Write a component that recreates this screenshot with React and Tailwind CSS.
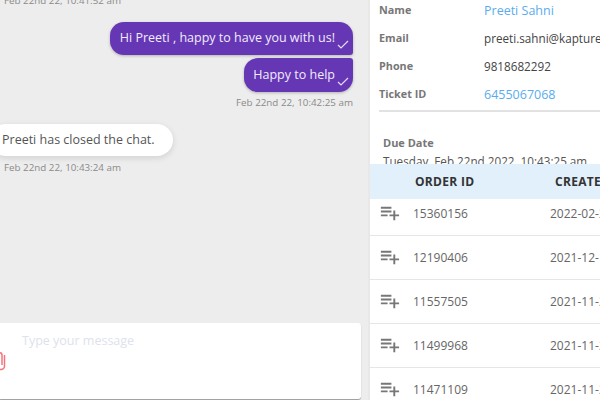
import { MdPlaylistAdd } from 'react-icons/md';

const info = [
  { label: "Name", value: "Preeti Sahni", link: true, big: true },
  { label: "Email", value: "preeti.sahni@kapturecrm.com" },
  { label: "Phone", value: "9818682292" },
  { label: "Ticket ID", value: "6455067068", link: true, big: true },
];

const orders = [
  { id: "15360156", date: "2022-02-22" },
  { id: "12190406", date: "2021-12-14" },
  { id: "11557505", date: "2021-11-24" },
  { id: "11499968", date: "2021-11-22" },
  { id: "11471109", date: "2021-11-20" },
];

function Tick() {
  return (
    <svg viewBox="0 0 12 9" className="absolute right-[4px] bottom-[6px] w-[12px] h-[9px]" fill="none" stroke="#e4dcf5" strokeWidth="1.2">
      <path d="M1 5l3 3 7-7" />
    </svg>
  );
}

function Stamp({ children, className }) {
  return <div className={`text-[9.8px] leading-[14px] text-[#8a8a8a] ${className}`}>{children}</div>;
}

export default function App() {
  return (
    <div className="flex w-[600px] h-[400px] overflow-hidden bg-white font-['Open_Sans',sans-serif]">
      {/* chat */}
      <div className="w-[368px] h-full flex flex-col bg-[#ededed] overflow-hidden">
        <div className="flex-1 flex flex-col pr-[15px] mt-[-6px]">
          <Stamp className="pl-[4px]">Feb 22nd 22, 10:41:52 am</Stamp>
          <div className="self-end relative mt-[14px] h-[33px] pl-[10px] pr-[18px] flex items-center rounded-l-[14px] rounded-tr-[14px] rounded-br-[3px] bg-[#6637b5] text-[12.5px] text-[#f1ecfb] shadow-[0_1px_3px_rgba(0,0,0,0.25)]">
            Hi Preeti , happy to have you with us!
            <Tick />
          </div>
          <div className="self-end relative mt-[3px] h-[34px] pl-[9px] pr-[18px] flex items-center rounded-l-[14px] rounded-br-[14px] rounded-tr-[3px] bg-[#6637b5] text-[12.5px] text-[#f1ecfb] shadow-[0_1px_3px_rgba(0,0,0,0.25)]">
            Happy to help
            <Tick />
          </div>
          <Stamp className="self-end mt-[4px]">Feb 22nd 22, 10:42:25 am</Stamp>
          <div className="self-start mt-[14px] ml-[-10px] h-[32px] pl-[12px] pr-[18px] flex items-center rounded-[16px] bg-white text-[12.5px] text-[#555] shadow-[0_2px_6px_rgba(0,0,0,0.12)]">
            Preeti has closed the chat.
          </div>
          <Stamp className="pl-[4px] mt-[5px]">Feb 22nd 22, 10:43:24 am</Stamp>
        </div>
        <div className="relative h-[76px] mr-[7px] mb-[1px] rounded-r-[3px] bg-white shadow-[0_1px_1px_rgba(0,0,0,0.35)] pl-[22px] pt-[8px] text-[12.5px] leading-[20px] text-[#dde2ec]">
          Type your message
          <svg viewBox="0 0 10 20" className="absolute left-[-4px] top-[29px] w-[10px] h-[20px]" fill="none" stroke="#f4747c" strokeWidth="1.5">
            <path d="M8.5 3v11a3.5 3.5 0 0 1-7 0V3a2 2 0 0 1 4.5 0v10" />
          </svg>
        </div>
      </div>

      {/* details */}
      <div className="flex-1 min-w-0 flex flex-col border-l-2 border-[#e8e8e8] overflow-hidden">
        <div className="h-[164px] shrink-0 overflow-hidden pl-[9px]">
          <div className="mt-[-4px] border-b-2 border-[#e2e2e2] pb-[2px]">
            {info.map((row) => (
              <div key={row.label} className="flex items-center h-[28px] whitespace-nowrap">
                <div className="w-[105px] shrink-0 text-[10.8px] font-bold text-[#777]">{row.label}</div>
                <div className={`mt-[2px] ${row.big ? "text-[12.5px]" : "text-[11.7px]"} ${row.link ? "text-[#5aaced]" : "text-[#444]"}`}>
                  {row.value}
                </div>
              </div>
            ))}
          </div>
          <div className="pl-[4px] mt-[23px] text-[11px] font-bold leading-[16px] text-[#777]">Due Date</div>
          <div className="pl-[4px] mt-[1px] text-[11.7px] leading-[18px] text-[#555] whitespace-nowrap">Tuesday, Feb 22nd 2022, 10:43:25 am</div>
        </div>
        <div className="relative z-10 flex items-center h-[35px] shrink-0 bg-[#e1f0fb] text-[12px] font-bold text-[#333] whitespace-nowrap">
          <div className="w-[45px] shrink-0" />
          <div className="w-[140px] shrink-0 tracking-[0.3px]">ORDER ID</div>
          <div className="tracking-[0.3px]">CREATED DATE</div>
        </div>
        <div className="mt-[-7px]">
          {orders.map((order) => (
            <div key={order.id} className="flex items-center h-[44px] border-b border-[#e6e6e6] text-[12px] text-[#666] whitespace-nowrap">
              <div className="w-[43px] shrink-0 pl-[8px]">
                <MdPlaylistAdd className="text-[23px] text-[#777] mt-[-2px]" />
              </div>
              <div className="w-[137px] shrink-0">{order.id}</div>
              <div>{order.date}</div>
            </div>
          ))}
        </div>
      </div>
    </div>
  );
}
